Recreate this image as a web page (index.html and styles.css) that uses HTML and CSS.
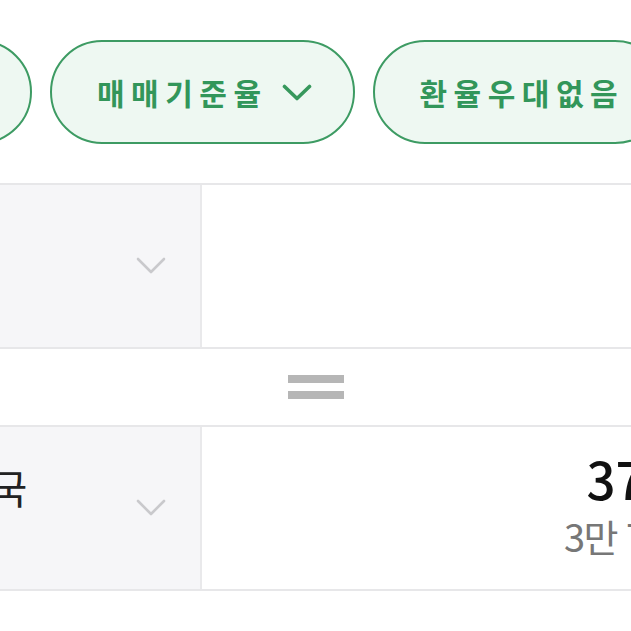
FILE: index.html
```html
<!DOCTYPE html>
<html lang="ko">
<head>
<meta charset="utf-8">
<title>환율 계산기</title>
<link rel="stylesheet" href="styles.css">
</head>
<body>
<div class="chips">
  <div class="chip chip-first"><span class="chip-label">미국 USD</span></div>
  <div class="chip">
    <span class="chip-label">매매기준율</span>
    <svg class="chip-arrow" viewBox="0 0 30 17" width="30" height="17"><polyline points="2.5,2.5 15,14.5 27.5,2.5" fill="none" stroke="#37985c" stroke-width="3.6" stroke-linecap="round" stroke-linejoin="round"/></svg>
  </div>
  <div class="chip"><span class="chip-label">환율우대없음</span></div>
</div>

<div class="calc">
  <div class="row">
    <div class="cell-left">
      <span class="country"></span>
      <svg class="sel-arrow" viewBox="0 0 30 18" width="30" height="18"><polyline points="2,2 15,15 28,2" fill="none" stroke="#c9c9cc" stroke-width="2.6" stroke-linecap="round" stroke-linejoin="round"/></svg>
    </div>
    <div class="cell-right"></div>
  </div>

  <div class="equals">
    <span class="eq-bar"></span>
    <span class="eq-bar"></span>
  </div>

  <div class="row">
    <div class="cell-left">
      <span class="country">대한민국</span>
      <svg class="sel-arrow" viewBox="0 0 30 18" width="30" height="18"><polyline points="2,2 15,15 28,2" fill="none" stroke="#c9c9cc" stroke-width="2.6" stroke-linecap="round" stroke-linejoin="round"/></svg>
    </div>
    <div class="cell-right">
      <div class="amount">37,000</div>
      <div class="amount-words">3만 7,000원</div>
    </div>
  </div>
</div>
</body>
</html>
```

FILE: styles.css
```css
html, body {
  margin: 0;
  padding: 0;
  background: #ffffff;
  overflow: hidden;
  font-family: "Noto Sans CJK KR", "Noto Sans", sans-serif;
}

.chips {
  display: flex;
  gap: 18px;
  margin-top: 40px;
  margin-left: -150px;
  width: 1000px;
}

.chip {
  box-sizing: border-box;
  height: 104px;
  border: 2.5px solid #3d9b63;
  border-radius: 52px;
  background: #eef8f2;
  display: flex;
  align-items: center;
  padding: 0 41px 0 45px;
  gap: 14px;
  flex-shrink: 0;
}

.chip-first {
  width: 182px;
  justify-content: flex-end;
  padding-right: 60px;
}

.chip-label {
  color: #32965a;
  font-size: 30px;
  font-weight: 700;
  letter-spacing: 6.5px;
  white-space: nowrap;
}

.chip-arrow {
  display: block;
}

.calc {
  margin-top: 39px;
  margin-left: -100px;
  width: 1000px;
}

.row {
  display: flex;
  height: 166px;
  box-sizing: border-box;
  border-top: 2px solid #e7e7e9;
  border-bottom: 2px solid #e7e7e9;
}

.cell-left {
  box-sizing: border-box;
  width: 302px;
  background: #f6f6f8;
  border-right: 2px solid #e9e9eb;
  display: flex;
  align-items: center;
  justify-content: space-between;
  padding: 0 34px 0 0;
}

.country {
  align-self: flex-start;
  margin-top: 31px;
  margin-left: -20px;
  font-size: 40px;
  color: #222;
  white-space: nowrap;
}

.sel-arrow {
  display: block;
}

.cell-right {
  flex: 1;
  display: flex;
  flex-direction: column;
  align-items: flex-end;
  padding: 20px 153px 0 0;
}

.amount {
  font-size: 51px;
  font-weight: 500;
  color: #111;
  line-height: 62px;
  white-space: nowrap;
}

.amount-words {
  font-size: 38px;
  color: #777;
  line-height: 46px;
  margin-top: 4px;
  letter-spacing: -1.5px;
  white-space: nowrap;
}

.equals {
  height: 76px;
  display: flex;
  flex-direction: column;
  align-items: center;
  justify-content: center;
  gap: 8px;
  margin-left: 100px;
  width: 631px;
}

.eq-bar {
  display: block;
  width: 56px;
  height: 8px;
  background: #b6b6b6;
}
```
